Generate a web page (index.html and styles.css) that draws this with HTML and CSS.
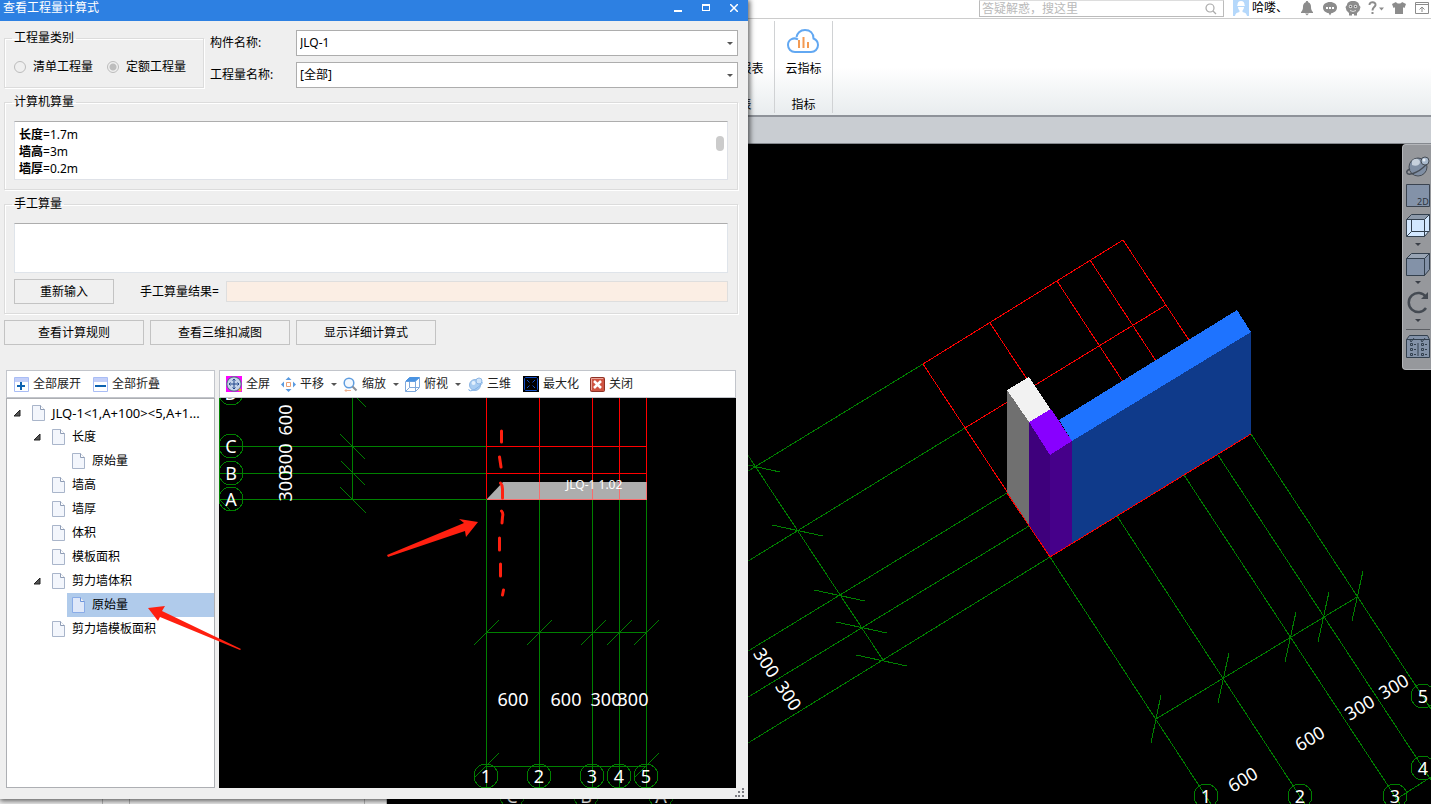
FILE: index.html
```html
<!DOCTYPE html>
<html lang="zh-CN">
  <head>
    <meta charset="utf-8">
    <title>查看工程量计算式</title>
    <link rel="stylesheet" href="styles.css">
  </head>
  <body>
    <div class="app">
      <header class="topbar">
        <div class="search">
          <input type="text" aria-label="搜索" placeholder="答疑解惑，搜这里">
          <svg width="12" height="12" viewBox="0 0 12 12" fill="none" stroke="#aaa" stroke-width="1.2"><circle cx="5" cy="5" r="4"/><path d="M8 8l3 3"/></svg>
        </div>
        <a class="user" href="#">
          <svg width="16" height="16" viewBox="0 0 16 16"><path fill="#b5d8fb" d="M0 0h16v16H0z"/><path fill="#fff" d="M4.500 5a3.500 4 0 0 1 7 0l.5 1H4zM5 7h6c0 2-1 3-1.500 3.500V12c2 .5 4 1 4.500 4H2c.5-3 2.500-3.500 4.500-4v-1.500C6 10 5 9 5 7z"/></svg>
          哈喽、
        </a>
        <nav class="top-icons">
          <button aria-label="通知"><svg width="16" height="16" viewBox="0 0 16 16" fill="#8c8c8c"><path d="M8 1c.8 0 1.200.5 1.200 1.200C11.500 3 12 5 12 7c0 2.500.8 4 2 5v1H2v-1c1.200-1 2-2.500 2-5 0-2 .5-4 2.800-4.800C6.800 1.500 7.200 1 8 1zM6 13.500h4L8 15.500z"/></svg></button>
          <button aria-label="消息"><svg width="16" height="16" viewBox="0 0 16 16"><path fill="#8c8c8c" d="M8 2c4 0 7 2.300 7 5.500S12 13 9.500 13L8 15.500 6.500 13C4 13 1 10.700 1 7.500S4 2 8 2z"/><path fill="#fff" d="M4 7h2v2H4zM7 7h2v2H7zM10 7h2v2h-2z"/></svg></button>
          <button aria-label="客服"><svg width="16" height="16" viewBox="0 0 16 16"><path fill="#8c8c8c" d="M8 1c4 0 6 2 6 4l1.500 2-1 3.500L12 13v2.500H9V14H7v1.500H4V13l-2.500-2.500-1-3.500L2 5c0-2 2-4 6-4z"/><circle cx="5.500" cy="6.500" r="1.700" fill="#ddd"/><circle cx="10.500" cy="6.500" r="1.700" fill="#ddd"/><circle cx="5.500" cy="6.500" r=".8" fill="#555"/><circle cx="10.500" cy="6.500" r=".8" fill="#555"/><path d="M5 10.500q3 2 6 0" stroke="#ddd" fill="none"/></svg></button>
          <button aria-label="帮助"><svg width="16" height="16" viewBox="0 0 16 16" fill="none" stroke="#8c8c8c"><path stroke-width="2" d="M1.500 5c0-4 6.500-3.500 6 0C7.200 7.300 4.500 7 4.500 10.500M4.500 12v2"/><path fill="#8c8c8c" stroke="none" d="M11 7.500h5l-2.500 3z"/></svg></button>
          <button aria-label="皮肤"><svg width="16" height="16" viewBox="0 0 16 16" fill="#8c8c8c"><path d="M5 2c1 2 5 2 6 0l4 2-1.500 4-1.500-.8V14H4V7.200L2.500 8 1 4z"/></svg></button>
          <button aria-label="收起功能区"><svg width="16" height="16" viewBox="0 0 16 16" fill="none" stroke="#8c8c8c"><path d="M1.500 2.500h13v11h-13zM1.500 4.500h13M8 12V7M5.500 9.500L8 7l2.500 2.500"/></svg></button>
        </nav>
      </header>

      <div class="ribbon">
        <section class="ribbon-group ribbon-report">
          <button>
            <svg width="32" height="32" viewBox="0 0 32 32" fill="none" stroke="#e8853a" stroke-width="2"><path d="M3 6h18v20H3z"/><path d="M20 17l3 8h-6"/></svg>
            查看报表
          </button>
          <h2>报表</h2>
        </section>
        <section class="ribbon-group">
          <button>
            <svg width="32" height="32" viewBox="0 0 32 32" fill="none"><path stroke="#62a8f2" stroke-width="2" d="M11 13.500C7 11 1 13 1 19c0 4 3 7 7 7h16c4 0 7-3 7-7 0-3-2-5.500-4.500-6.500C26.500 7 23 4 18 4c-5 0-8 3.500-8.500 7"/><path stroke="#f39a52" stroke-width="2" d="M12 14v8M16.500 11v11M21 16v6"/></svg>
            云指标
          </button>
          <h2>指标</h2>
        </section>
      </div>
      <div class="strip"></div>

      <main class="workspace">
        <aside class="dock"><div></div><div></div><div></div><div></div></aside>
        <svg class="scene" viewBox="387 144 1044 660" preserveAspectRatio="xMaxYMin slice">
          <!-- axes outside the building -->
          <g class="axis">
            <path d="M923 364L740 476M965 428L740 566M1007 493L740 656M1029 526L740 702M1050 557L740 748"/>
            <path d="M735 435L755 466L883 660"/>
            <path d="M730 461l50 11M772 525l51 11M814 590l51 11M836 622l51 11M856 655l51 11"/>
            <path d="M1050 557L1211 804M1117 516L1305 804M1184 475L1400 804M1218 455L1431 780M1251 434L1431 709"/>
            <path d="M1156 719L1357 597M1395 800L1431 777"/>
            <path d="M1161 695l-10 48M1229 653l-11 50M1296 612l-11 50M1329 592l-11 50M1363 571l-11 50"/>
            <circle cx="1206" cy="796" r="12"/><circle cx="1300" cy="796" r="12"/><circle cx="1395" cy="796" r="12"/>
            <circle cx="1423" cy="768" r="12"/><circle cx="1423" cy="696" r="12"/>
            <circle cx="512" cy="796" r="12"/><circle cx="586" cy="796" r="12"/><circle cx="661" cy="796" r="12"/>
          </g>
          <g class="grid">
            <path d="M923 364L1123 240L1251 434M923 364L1050 557M965 428L1166 305M990 323L1050 414M1057 281L1150 423M1090 260L1190 413"/>
          </g>
          <!-- walls -->
          <g shape-rendering="crispEdges">
            <path fill="#707070" d="M1007 390l22 32v104l-22-33z"/>
            <path fill="#f2f2f2" d="M1007 390l22-13 22 33-22 12z"/>
            <path fill="#1e73ff" d="M1059 420l178-110 14 22-179 109z"/>
            <path fill="#0f3a8a" d="M1072 441l179-109v102l-179 110z"/>
            <path fill="#8800ff" d="M1029 422l22-13 21 32-22 14z"/>
            <path fill="#3e007c" d="M1029 422l21 33v102l-21-31z"/>
            <path fill="#46008a" d="M1050 455l22-14v103l-22 13z"/>
          </g>
          <path class="grid" d="M1007 493L1050 557L1251 434"/>
          <g class="dims">
            <text x="1206" y="803">1</text><text x="1300" y="803">2</text><text x="1395" y="803">3</text>
            <text x="1423" y="775">4</text><text x="1423" y="703">5</text>
            <text x="512" y="803">C</text><text x="586" y="803">B</text><text x="661" y="803">A</text>
            <text transform="translate(1243 780) rotate(-31)" y="6">600</text>
            <text transform="translate(1310 739) rotate(-31)" y="6">600</text>
            <text transform="translate(1360 708) rotate(-31)" y="6">300</text>
            <text transform="translate(1394 687) rotate(-31)" y="6">300</text>
            <text transform="translate(766 663) rotate(56)" y="6">300</text>
            <text transform="translate(788 696) rotate(56)" y="6">300</text>
          </g>
        </svg>

        <div class="viewbar">
          <button aria-label="动态观察"><svg width="26" height="26" viewBox="0 0 26 26"><circle cx="13" cy="14" r="9" fill="#7f8ea3" stroke="#454c55"/><path d="M7 8c3-4 8-2 8 1s-4 5-8 3z" fill="#c6d0dc"/><path d="M2 20c2 4 16-3 20-10M2 20c-1-2 1-3 3-4" fill="none" stroke="#454c55" stroke-width="1.500"/><circle cx="20" cy="8" r="4" fill="#a9b9cc" stroke="#454c55"/><circle cx="19" cy="7" r="1.500" fill="#e6edf5"/></svg></button>
          <button aria-label="二维"><svg width="26" height="26" viewBox="0 0 26 26"><path d="M1.500 1.500h23v22h-23z" fill="#8392a8" stroke="#3a434f"/><text x="12" y="22" font-size="9" fill="#2b323c">2D</text></svg></button>
          <button aria-label="俯视"><svg width="26" height="26" viewBox="0 0 26 26" stroke="#33404e"><path d="M1.500 6.500l5-5h18l-5 5z" fill="#8d9aab"/><path d="M1.500 6.500h18v17h-18z" fill="#d3e8ff"/><path d="M19.500 6.500l5-5v16l-5 6z" fill="#d3e8ff"/><path d="M6.500 6.500v12h13M1.500 23.500l5-5M19.500 18.500h5" fill="none"/></svg></button>
          <i class="more"></i>
          <button aria-label="实体"><svg width="26" height="26" viewBox="0 0 26 26" stroke="#33404e" fill="#8392a8"><path d="M1.500 7.500l5-5h18l-5 5z" fill="#98a4b4"/><path d="M1.500 7.500h18v17h-18zM19.500 7.500l5-5v16l-5 6z"/></svg></button>
          <i class="more"></i>
          <button aria-label="旋转"><svg width="26" height="26" viewBox="0 0 26 26" fill="none" stroke="#444a52" stroke-width="2.500"><path d="M21 19a9.500 9.500 0 1 1 0-11"/><path stroke="none" fill="#444a52" d="M23 3v7h-7z"/></svg></button>
          <i class="more"></i>
          <hr>
          <button aria-label="显示设置"><svg width="26" height="26" viewBox="0 0 26 26" fill="none" stroke="#33404e"><path fill="#8392a8" d="M1.500 5.500l3-4h18l2 4v18h-23zM1.500 5.500h23"/><path d="M13 9v13M5.500 9.500h2v2h-2zM5.500 14.500h2v2h-2zM5.500 19.500h2v2h-2zM16.500 9.500h2v2h-2zM16.500 14.500h2v2h-2zM16.500 19.500h2v2h-2zM9 10.500h2M9 15.500h2M9 20.500h2M20 10.500h2M20 15.500h2M20 20.500h2M5 6l1 2 3-4M16 6l1 2 3-4"/></svg></button>
        </div>
      </main>
    </div>

    <div class="dialog" role="dialog" aria-labelledby="dlg-title">
      <div class="titlebar">
        <h1 id="dlg-title">查看工程量计算式</h1>
        <button aria-label="最小化"><svg width="8" height="8" viewBox="0 0 8 8" fill="#fff"><path d="M0 6h8v2H0z"/></svg></button>
        <button aria-label="最大化"><svg width="8" height="8" viewBox="0 0 8 8" fill="#fff"><path fill-rule="evenodd" d="M0 0h8v7H0zM1 2v4h6V2z"/></svg></button>
        <button aria-label="关闭"><svg width="8" height="8" viewBox="0 0 8 8" stroke="#fff" stroke-width="1.500"><path d="M0 0l8 8M8 0L0 8"/></svg></button>
      </div>

      <form class="dialog-body" onsubmit="return false">
        <div class="filters">
          <fieldset class="kind">
            <legend>工程量类别</legend>
            <label><input type="radio" name="kind" disabled>清单工程量</label>
            <label><input type="radio" name="kind" checked disabled>定额工程量</label>
          </fieldset>
          <div class="fields">
            <label for="part">构件名称:</label>
            <div class="combo">
              <select id="part"><option>JLQ-1</option></select>
              <i class="caret"></i>
            </div>
            <label for="quantity">工程量名称:</label>
            <div class="combo">
              <select id="quantity"><option>[全部]</option></select>
              <i class="caret"></i>
            </div>
          </div>
        </div>

        <fieldset>
          <legend>计算机算量</legend>
          <div class="result">
            <output><b>长度</b>=1.7m<br><b>墙高</b>=3m<br><b>墙厚</b>=0.2m</output>
            <i class="thumb"></i>
          </div>
        </fieldset>

        <fieldset>
          <legend>手工算量</legend>
          <textarea class="manual" aria-label="手工算量"></textarea>
          <div class="manual-row">
            <button class="btn">重新输入</button>
            <label for="manual-result">手工算量结果=</label>
            <input id="manual-result" type="text" readonly>
          </div>
        </fieldset>

        <div class="actions">
          <button class="btn">查看计算规则</button>
          <button class="btn">查看三维扣减图</button>
          <button class="btn">显示详细计算式</button>
        </div>

        <div class="panes">
          <section class="pane">
            <div class="toolbar tree-tools">
              <button><svg width="15" height="15" viewBox="0 0 15 15"><path fill="#fff" stroke="#a9bdf5" d="M.5.5h14v14H.5z"/><path fill="#c3cff9" d="M1 1h13v4H1z"/><path stroke="#0d62b0" stroke-width="2" d="M3 9h8M7 5v8"/></svg>全部展开</button>
              <button><svg width="15" height="15" viewBox="0 0 15 15"><path fill="#fff" stroke="#a9bdf5" d="M.5.5h14v14H.5z"/><path fill="#c3cff9" d="M1 1h13v4H1z"/><path stroke="#0d62b0" stroke-width="2" d="M2 9h11"/></svg>全部折叠</button>
            </div>
            <svg class="defs" width="0" height="0">
              <symbol id="page" viewBox="0 0 13 16">
                <path class="sheet" d="M.5.5h8l4 4v11H.5z"/>
                <path fill="#fff" stroke="#8e9cb5" d="M8.500.5v4h4"/>
              </symbol>
              <symbol id="open" viewBox="0 0 7 7"><path d="M6 0v6H0z" fill="#555" stroke="#222"/></symbol>
            </svg>
            <ul class="tree">
              <li>
                <div class="node root"><svg class="twist"><use href="#open"/></svg><span><svg class="page"><use href="#page"/></svg>JLQ-1&lt;1,A+100&gt;&lt;5,A+1...</span></div>
                <ul>
                  <li>
                    <div class="node"><svg class="twist"><use href="#open"/></svg><span><svg class="page"><use href="#page"/></svg>长度</span></div>
                    <ul>
                      <li><div class="node"><span><svg class="page"><use href="#page"/></svg>原始量</span></div></li>
                    </ul>
                  </li>
                  <li><div class="node"><span><svg class="page"><use href="#page"/></svg>墙高</span></div></li>
                  <li><div class="node"><span><svg class="page"><use href="#page"/></svg>墙厚</span></div></li>
                  <li><div class="node"><span><svg class="page"><use href="#page"/></svg>体积</span></div></li>
                  <li><div class="node"><span><svg class="page"><use href="#page"/></svg>模板面积</span></div></li>
                  <li>
                    <div class="node"><svg class="twist"><use href="#open"/></svg><span><svg class="page"><use href="#page"/></svg>剪力墙体积</span></div>
                    <ul>
                      <li><div class="node selected"><span><svg class="page"><use href="#page"/></svg>原始量</span></div></li>
                    </ul>
                  </li>
                  <li><div class="node"><span><svg class="page"><use href="#page"/></svg>剪力墙模板面积</span></div></li>
                </ul>
              </li>
            </ul>
          </section>

          <section class="pane">
            <div class="toolbar">
              <button><svg width="16" height="16" viewBox="0 0 16 16"><path fill="#f0f" d="M0 0h16v16H0z"/><circle cx="8" cy="8" r="7.200" fill="#c4d3ea" stroke="#5d6f8e" stroke-width="1.200"/><path d="M8 3v10M3 8h10M6.500 4.500L8 3l1.500 1.500M6.500 11.500L8 13l1.500-1.500M4.500 6.500L3 8l1.500 1.500M11.500 6.500L13 8l-1.500 1.500" fill="none" stroke="#23468c"/><circle cx="14" cy="14" r="1.500" fill="#e8a628"/></svg>全屏</button>
              <button class="drop"><svg width="15" height="15" viewBox="0 0 15 15"><path fill="#5b9be0" d="M7.500 0l3 3h-6zM7.500 15l3-3h-6zM0 7.500l3-3v6zM15 7.500l-3-3v6z"/><path fill="#fff" stroke="#eda073" d="M5.500 5.500h4v4h-4z"/></svg>平移<i class="caret"></i></button>
              <button class="drop"><svg width="15" height="15" viewBox="0 0 15 15" fill="none"><circle cx="6" cy="6" r="4.800" fill="#f2f8ff" stroke="#5f9ddf" stroke-width="1.500"/><path d="M9.500 9.500l4 4" stroke="#8a8f98" stroke-width="2"/><path d="M2 13.500h6M3.500 12L2 13.500 3.500 15" stroke="#efb08c"/></svg>缩放<i class="caret"></i></button>
              <button class="drop"><svg width="15" height="15" viewBox="0 0 15 15" fill="none" stroke="#7fa9dc"><path d="M4.500 4v6.500H14M.5 14.500l4-4"/><path d="M.5 4.500h10v10H.5zM10.500 14.500l4-4V1"/><path fill="#4a93e2" stroke="#4a93e2" d="M1 4l3.500-3.500h10L10.500 4z"/></svg>俯视<i class="caret"></i></button>
              <button><svg width="15" height="15" viewBox="0 0 15 15"><circle cx="7" cy="8" r="5.500" fill="#a9cdf2" stroke="#8db6e4"/><circle cx="11" cy="4" r="3" fill="#cfe4fa" stroke="#8db6e4"/><path d="M1 12c-1 3 4 2 8-1s6-5 5-6" fill="none" stroke="#7fb0e6"/><circle cx="5.500" cy="6" r="2" fill="#e3f0fd"/></svg>三维</button>
              <button><svg width="16" height="16" viewBox="0 0 16 16" fill="none"><path fill="#000" d="M0 0h16v16H0z"/><path stroke="#1550c8" d="M2.500 1.500h11l1 1v11l-1 1h-11l-1-1v-11zM4 4l2.500 2.500M12 4L9.500 6.500M4 12l2.500-2.500M12 12L9.500 9.500"/></svg>最大化</button>
              <button><svg width="15" height="15" viewBox="0 0 15 15"><rect x=".5" y=".5" width="14" height="14" rx="1" fill="#cf5442" stroke="#8e3226"/><path stroke="#e9a79c" fill="none" d="M1.500 13V1.500H13"/><path d="M4 4l7 7M11 4l-7 7" stroke="#fff" stroke-width="2.500"/></svg>关闭</button>
            </div>
            <svg class="plan" viewBox="219 398 517 390" preserveAspectRatio="xMinYMin slice">
              <g class="axis">
                <path d="M219.500 398v101M352.500 398v101M219 446.500h267M219 473.500h267M219 499.500h267"/>
                <path d="M357 398l9 9M340 434l25 25M341 461l24 24M340 487l26 26M219 499l12 12"/>
                <path d="M486.500 499v289M539.500 499v289M592.500 499v289M619.500 499v289M646.500 499v289"/>
                <path d="M486 632.500h160M486 766.500h160"/>
                <path d="M474 645l25-25M527 645l25-25M581 645l25-25M607 645l25-25M634 645l25-25M474 778l25-25M634 778l25-25"/>
                <circle cx="231" cy="393" r="12"/><circle cx="231" cy="446" r="12"/><circle cx="231" cy="473" r="12"/><circle cx="231" cy="499" r="12"/>
                <circle cx="486" cy="776" r="12"/><circle cx="539" cy="776" r="12"/><circle cx="592" cy="776" r="12"/><circle cx="619" cy="776" r="12"/><circle cx="646" cy="776" r="12"/>
              </g>
              <path class="grid" d="M486.500 398v101M539.500 398v101M592.500 398v101M619.500 398v101M646.500 398v101M486 446.500h160M486 473.500h160"/>
              <path fill="#adadad" d="M487 499l16-17h143v17z"/>
              <path fill="none" stroke="#f96d6d" shape-rendering="crispEdges" d="M539.500 482v17M592.500 482v17M619.500 482v17M646.500 482v17M487 499.500h160"/>
              <g class="dims">
                <text x="231" y="400">D</text><text x="231" y="453">C</text><text x="231" y="480">B</text><text x="231" y="506">A</text>
                <text transform="translate(286 420) rotate(-90)" y="6">600</text>
                <text transform="translate(286 459) rotate(-90)" y="6">300</text>
                <text transform="translate(286 486) rotate(-90)" y="6">300</text>
                <text x="513" y="706">600</text><text x="566" y="706">600</text><text x="606" y="706">300</text><text x="633" y="706">300</text>
                <text x="486" y="783">1</text><text x="539" y="783">2</text><text x="592" y="783">3</text><text x="619" y="783">4</text><text x="646" y="783">5</text>
              </g>
              <text class="wall-name" x="566" y="489">JLQ-1 1.02</text>
            </svg>
          </section>
        </div>
      </form>

      <svg class="grip" width="10" height="10" viewBox="0 0 10 10" fill="#7a7a80"><path d="M7 0h2v2H7zM3 3h2v2H3zM7 3h2v2H7zM0 7h2v2H0zM3 7h2v2H3zM7 7h2v2H7z"/></svg>

      <!-- hand-drawn marks, they run across both panes -->
      <svg class="marks" viewBox="0 0 748 799" preserveAspectRatio="xMinYMin meet">
        <path d="M387 555L464 523L459 519L478 522L466 537L465 531L388 557z"/>
        <path d="M148 608L165 606L162 611L241 649L240 650L160 617L158 621z"/>
        <path class="dash" d="M501.500 431v11M499.500 457l1.500 10M500.500 483q2 2 2 6v9M501.500 511q2 2 1 6l-.5 6M499.500 538v12M500.500 564v12M503.500 590l-1 5"/>
      </svg>
    </div>
  </body>
</html>
```

FILE: styles.css
```css
* { box-sizing: border-box; }
body {
  margin: 0;
  height: 100vh;
  overflow: hidden;
  position: relative;
  background: #000;
  color: #000;
  font: 12px/16px "Noto Sans", "Noto Sans CJK SC", sans-serif;
}
button, input, select, textarea { font: inherit; color: inherit; }
button { padding: 0; border: 0; background: none; }
h1, h2 { margin: 0; font: inherit; }
ul { list-style: none; margin: 0; padding: 0; }
svg { display: block; flex: none; }

/* main window */
.app {
  height: 100%;
  display: flex;
  flex-direction: column;
}
.topbar {
  display: flex;
  justify-content: flex-end;
  height: 19px;
  padding-right: 1px;
  background: #fff;
  border-bottom: 1px solid #ccc;
}
.search {
  display: flex;
  align-items: center;
  width: 245px;
  height: 17px;
  padding-right: 6px;
  border: 1px solid #bbb;
  border-top-color: #ddd;
}
.search input {
  flex: 1;
  min-width: 0;
  height: 15px;
  padding: 0 2px;
  border: 0;
  background: none;
}
.search input::placeholder { color: #b9b9b9; }
.user {
  display: flex;
  gap: 3px;
  margin: 0 11px 0 9px;
  color: #000;
  text-decoration: none;
}
.top-icons { display: flex; gap: 7px; height: 16px; }

.ribbon {
  display: flex;
  justify-content: flex-end;
  height: 98px;
  padding: 2px 598px 2px 0;
  background: linear-gradient(#fff 50%, #e8ecee);
  border-bottom: 2px solid #8e9299;
}
.ribbon-group {
  display: flex;
  flex-direction: column;
  justify-content: space-between;
  align-items: center;
  width: 58px;
  border-right: 1px solid #d0d2d4;
}
.ribbon-report { width: 70px; }
.ribbon-group button {
  display: flex;
  flex-direction: column;
  align-items: center;
  gap: 3px;
  padding-top: 5px;
  white-space: nowrap;
}
.strip {
  height: 27px;
  background: #c9cdd2;
  border-bottom: 1px solid #85898f;
}

.workspace {
  flex: 1;
  min-height: 0;
  display: flex;
  position: relative;
}
.dock {
  width: 387px;
  display: grid;
  grid-template-columns: 103px 27px 235px 1fr;
  background: #eee;
}
.dock div { border-right: 1px solid #b5b5b5; }
.scene { flex: 1; min-width: 0; height: 100%; }
.axis, .grid {
  fill: none;
  stroke: #008000;
  shape-rendering: crispEdges;
}
.grid { stroke: #f00; }
.dims {
  fill: #fff;
  font-size: 18px;
  text-anchor: middle;
}

.viewbar {
  position: absolute;
  top: 0;
  right: 0;
  width: 29px;
  padding: 8px 0 9px 1px;
  display: flex;
  flex-direction: column;
  align-items: center;
  gap: 4px;
  background: #96989c;
  border: 1px solid #b4b6ba;
  border-right: 0;
  border-radius: 4px 0 0 4px;
}
.viewbar button { height: 26px; }
.viewbar hr {
  width: 24px;
  margin: 2px 0 0;
  border: 0;
  border-top: 1px solid #5b5e63;
}
.more {
  margin-bottom: 1px;
  border: 3px solid transparent;
  border-top: 3px solid #3a3f47;
  border-bottom: 0;
}

/* dialog */
.dialog {
  position: absolute;
  inset: 0 683px 5px 0;
  display: flex;
  flex-direction: column;
  background: #efefef;
  box-shadow: 1px 1px 5px 1px rgba(0, 0, 0, .6);
}
.titlebar {
  display: flex;
  height: 21px;
  background: #2d80e2;
  color: #fff;
}
.titlebar h1 { flex: 1; padding-left: 3px; }
.titlebar button {
  display: grid;
  place-items: center;
  width: 28px;
  height: 16px;
}
.dialog-body {
  flex: 1;
  min-height: 0;
  display: flex;
  flex-direction: column;
  gap: 6px;
  padding: 9px 10px 11px 4px;
}
.filters { display: flex; gap: 6px; }
fieldset {
  min-width: 0;
  margin: 0;
  padding: 11px 9px 9px;
  border: 1px solid #dcdcdc;
  box-shadow: inset 1px 1px #fff, 1px 1px #fff;
}
legend { margin-left: -2px; padding: 0 2px; }
.kind { display: flex; gap: 14px; width: 200px; padding: 13px 8px 12px 9px; }
.kind label { display: flex; align-items: center; gap: 7px; white-space: nowrap; }
input[type=radio] {
  appearance: none;
  width: 12px;
  height: 12px;
  margin: 0;
  border: 1px solid #bcbcbc;
  border-radius: 50%;
}
input[type=radio]:checked { background: radial-gradient(#bdbdbd 3px, transparent 4px); }
.fields {
  flex: 1;
  display: grid;
  grid-template-columns: 86px 1fr;
  row-gap: 6px;
  align-items: center;
}
.combo { display: grid; align-items: center; }
.combo > * { grid-area: 1 / 1; }
.combo select {
  appearance: none;
  width: 100%;
  height: 26px;
  padding: 0 3px;
  border: 1px solid #adadad;
  border-radius: 0;
  background: #fff;
}
.caret {
  border: 3px solid transparent;
  border-top-color: #555;
  border-bottom: 0;
}
.combo .caret { justify-self: end; margin-right: 5px; pointer-events: none; }

.result {
  display: flex;
  justify-content: space-between;
  height: 59px;
  padding: 4px 3px 2px 4px;
  overflow: hidden;
  background: #fff;
  border: 1px solid #dfe2e8;
  border-top-color: #adadad;
  line-height: 17px;
}
.thumb {
  width: 8px;
  height: 15px;
  margin-top: 10px;
  border-radius: 4px;
  background: #cbcbcb;
}
.manual {
  display: block;
  width: 100%;
  height: 50px;
  resize: none;
  border: 1px solid #dfe4ea;
  border-top-color: #adadad;
}
.manual-row {
  display: flex;
  align-items: center;
  margin-top: 6px;
}
.manual-row label { margin: 0 7px 0 26px; }
.manual-row input {
  flex: 1;
  height: 21px;
  background: #fbeee4;
  border: 1px solid #dedede;
}
.btn {
  width: 140px;
  height: 25px;
  border: 1px solid #c3c3c3;
  background: #f0f0f0;
}
.manual-row .btn { width: 100px; }
.actions { display: flex; gap: 6px; }

.panes {
  flex: 1;
  min-height: 0;
  display: grid;
  grid-template-columns: 209px 1fr;
  gap: 4px;
  margin: 19px 2px 0;
}
.pane {
  display: flex;
  flex-direction: column;
  min-width: 0;
  min-height: 0;
}
.toolbar {
  display: flex;
  height: 28px;
  padding-left: 1px;
  background: #fff;
  border: 1px solid #c2c5cb;
  color: #222;
}
.toolbar button {
  display: flex;
  align-items: center;
  gap: 4px;
  padding: 0 5px;
  margin-right: 1px;
  white-space: nowrap;
}
.tree-tools button { margin: 0 1px; }
.toolbar .drop { padding-right: 1px; margin: 0; }
.toolbar .drop + button:not(.drop) { margin: 0 2px 0 1px; }
.toolbar .caret { margin-left: 3px; }
.defs { position: absolute; }
.tree {
  flex: 1;
  padding-top: 2px;
  background: #fff;
  border: 1px solid #adafb3;
}
.tree li ul { padding-left: 20px; }
.node { display: flex; align-items: center; height: 24px; padding-left: 20px; }
.node span {
  flex: 1;
  display: flex;
  align-items: center;
  gap: 7px;
  height: 24px;
  padding-left: 5px;
  white-space: nowrap;
}
.root { font-size: 13px; }
.twist { width: 7px; height: 7px; margin: 0 6px 0 -13px; }
.page { width: 13px; height: 16px; }
.sheet { fill: #f3f6fc; stroke: #a9b5ca; }
.selected span { background: #b0cbeb; }
.selected .sheet, .selected .page { filter: brightness(.94) saturate(3); }
.plan {
  flex: 1;
  min-height: 0;
  width: 100%;
  background: #000;
}
.wall-name { fill: #fff; font-size: 12px; }
.grip { position: absolute; right: 3px; bottom: 1px; }
.marks {
  position: absolute;
  inset: 0;
  width: 100%;
  height: 100%;
  fill: #ff2010;
  pointer-events: none;
}
.dash {
  fill: none;
  stroke: #ff2010;
  stroke-width: 3;
  stroke-linecap: round;
}
```
